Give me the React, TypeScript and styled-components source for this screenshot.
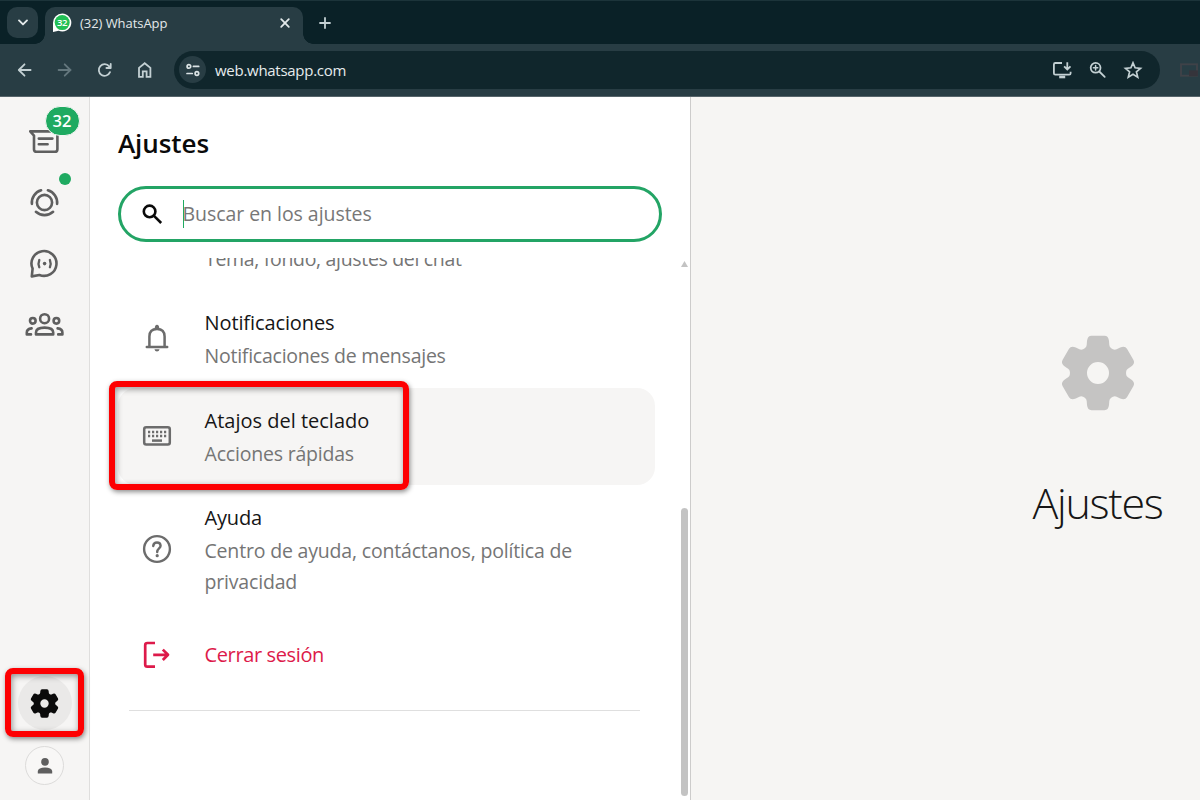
import React from 'react';
import styled, { createGlobalStyle } from 'styled-components';

const Global = createGlobalStyle`
  * { box-sizing: border-box; }
  body { margin: 0; background: #f6f5f3; font-family: "Open Sans", "Noto Sans", sans-serif; }
  svg { display: block; flex: none; }
`;

const Window = styled.div`
  width: 1200px;
  height: 800px;
  overflow: hidden;
  display: flex;
  flex-direction: column;
`;

/* ---------- browser chrome ---------- */

const TabStrip = styled.div`
  height: 44px;
  flex: none;
  background: #0a2127;
  border-top: 1px solid #1c343a;
  display: flex;
  align-items: flex-end;
`;

const TabSearch = styled.div`
  width: 31px;
  height: 31px;
  margin: 0 7px 6px;
  border-radius: 10px;
  background: #283d44;
  display: grid;
  place-items: center;
`;

const Tab = styled.div`
  position: relative;
  width: 258px;
  height: 37px;
  padding: 0 11px 5px 7px;
  border-radius: 10px 10px 0 0;
  background: #283d44;
  display: flex;
  align-items: center;
  &::before,
  &::after {
    content: '';
    position: absolute;
    bottom: 0;
    width: 10px;
    height: 10px;
  }
  &::before {
    left: -10px;
    background: radial-gradient(circle at 0 0, transparent 9.5px, #283d44 10px);
  }
  &::after {
    right: -10px;
    background: radial-gradient(circle at 100% 0, transparent 9.5px, #283d44 10px);
  }
`;

const TabTitle = styled.span`
  flex: 1;
  margin-left: 8px;
  padding-bottom: 1px;
  color: #e3e9ea;
  font-size: 13px;
  letter-spacing: -0.05px;
  white-space: nowrap;
`;

const NewTab = styled.div`
  margin: 0 0 14px 15px;
`;

const Toolbar = styled.div`
  height: 53px;
  flex: none;
  padding: 0 0 1px 16px;
  background: #283d44;
  border-bottom: 1px solid #56646a;
  display: flex;
  align-items: center;
`;

const NavIcons = styled.div`
  display: flex;
  gap: 22px;
`;

const AddressBar = styled.div`
  width: 986px;
  height: 38px;
  flex: none;
  margin-left: 20px;
  padding: 0 17px 0 5px;
  border-radius: 19px;
  background: #10262c;
  display: flex;
  align-items: center;
`;

const SiteInfo = styled.div`
  width: 27px;
  height: 27px;
  border-radius: 50%;
  background: #283d44;
  display: grid;
  place-items: center;
`;

const Url = styled.span`
  flex: 1;
  margin-left: 9px;
  color: #e6ebec;
  font-size: 15px;
  letter-spacing: -0.28px;
`;

const AddressActions = styled.div`
  display: flex;
  align-items: center;
  gap: 16px;
`;

const CastSlot = styled.div`
  margin-left: 20px;
`;

/* ---------- page ---------- */

const Page = styled.div`
  flex: 1;
  min-height: 0;
  display: flex;
`;

const Rail = styled.nav`
  width: 90px;
  flex: none;
  border-right: 1px solid #dfdedd;
  background: #f6f5f4;
  display: flex;
  flex-direction: column;
  align-items: center;
  padding: 25px 0 15px;
`;

const RailItem = styled.div`
  position: relative;
  width: 40px;
  height: 40px;
  margin-bottom: 21px;
  display: grid;
  place-items: center;
`;

const CountBadge = styled.span`
  position: absolute;
  left: 20px;
  top: -16px;
  width: 35px;
  height: 30px;
  border-radius: 15px;
  background: #1faa61;
  border: 1px solid #f6f5f4;
  color: #fff;
  font-size: 16.5px;
  font-weight: 600;
  line-height: 27px;
  text-align: center;
`;

const UnreadDot = styled.span`
  position: absolute;
  left: 34px;
  top: -10px;
  width: 12px;
  height: 12px;
  border-radius: 50%;
  background: #1faa61;
`;

const RailFooter = styled.div`
  margin-top: auto;
  display: flex;
  flex-direction: column;
  align-items: center;
  gap: 16px;
`;

const SettingsButton = styled.div`
  position: relative;
  width: 54px;
  height: 54px;
  border-radius: 50%;
  background: #eae9e8;
  display: grid;
  place-items: center;
`;

const Avatar = styled.div`
  width: 39px;
  height: 39px;
  border-radius: 50%;
  border: 1px solid #dcdbda;
  background: #f8f7f6;
  display: grid;
  place-items: center;
`;

const Highlight = styled.div<{ $x: number; $y: number; $w: number; $h: number }>`
  position: absolute;
  left: ${(p) => p.$x}px;
  top: ${(p) => p.$y}px;
  width: ${(p) => p.$w}px;
  height: ${(p) => p.$h}px;
  border: 6px solid #fd0002;
  border-radius: 8px;
  box-shadow: 1px 2px 5px rgba(0, 0, 0, 0.45), inset 1px 2px 6px rgba(0, 0, 0, 0.42);
  pointer-events: none;
`;

const Panel = styled.section`
  width: 601px;
  flex: none;
  background: #fff;
  border-right: 1px solid #cdcccb;
  display: flex;
  flex-direction: column;
`;

const PanelTitle = styled.h1`
  margin: 29px 0 0 28px;
  color: #0a0a0a;
  font-size: 26px;
  font-weight: 600;
  line-height: 34px;
  letter-spacing: -0.08px;
`;

const SearchBox = styled.div`
  width: 544px;
  height: 56px;
  flex: none;
  margin: 26px 0 0 28px;
  padding-left: 20.5px;
  border: 3px solid #23a465;
  border-radius: 28px;
  display: flex;
  align-items: center;
`;

const Caret = styled.span`
  width: 1px;
  height: 28px;
  margin: 0 -1px 0 19px;
  background: #1faa61;
`;

const Placeholder = styled.span`
  padding-bottom: 2px;
  color: #777;
  font-size: 19.5px;
  letter-spacing: -0.05px;
`;

const Scroller = styled.div`
  flex: 1;
  min-height: 0;
  margin-top: 16px;
  overflow: hidden;
  display: flex;
  justify-content: space-between;
`;

const List = styled.div`
  width: 537px;
  margin: -16px 0 0 28px;
`;

const ScrolledItem = styled.div`
  padding: 0 0 16px 87px;
`;

const Item = styled.div<{ $active?: boolean; $roomy?: boolean }>`
  position: relative;
  padding: ${(p) => (p.$roomy ? '25px 0 24px 24px' : '17px 0 16px 24px')};
  border-radius: 18px;
  background: ${(p) => (p.$active ? '#f6f5f4' : 'transparent')};
  display: flex;
  align-items: center;
  margin-bottom: ${(p) => (p.$active ? 0 : 1)}px;
`;

const ItemIcon = styled.div`
  width: 30px;
  height: 32px;
  padding-bottom: 2px;
  margin-right: 32.5px;
`;

const ItemText = styled.div`
  width: 400px;
`;

const ItemTitle = styled.div<{ $danger?: boolean; $tracking: number }>`
  color: ${(p) => (p.$danger ? '#dd1a4a' : '#161616')};
  font-size: 20px;
  line-height: 32px;
  letter-spacing: ${(p) => p.$tracking}px;
`;

const ItemDetail = styled.div<{ $tracking: number }>`
  margin-top: 1px;
  color: #757575;
  font-size: 19.5px;
  line-height: 31px;
  letter-spacing: ${(p) => p.$tracking}px;
`;

const Divider = styled.div`
  height: 1px;
  width: 511px;
  margin: 15px 0 0 11px;
  background: #dfdfdf;
`;

const ScrollTrack = styled.div`
  width: 10px;
  padding: 3px 0 4px 1px;
  display: flex;
  flex-direction: column;
  justify-content: space-between;
`;

const ScrollThumb = styled.div`
  width: 7px;
  height: 288px;
  border-radius: 4px;
  background: #c3c3c3;
`;

const Detail = styled.main`
  flex: 1;
  background: #f6f5f3;
  display: flex;
  flex-direction: column;
  align-items: center;
  padding: 238px 0 0 304px;
`;

const DetailTitle = styled.h2`
  margin: 57px 0 0;
  color: #161616;
  font-size: 43px;
  font-weight: 300;
  line-height: 70px;
  letter-spacing: -1.3px;
`;

/* ---------- icons ---------- */

type Stroke = { w: number; h: number; box?: string; color?: string; sw?: number; children: React.ReactNode };
const Line = ({ w, h, box, color = '#5f5f5f', sw = 2.6, children }: Stroke) => (
  <svg width={w} height={h} viewBox={box ?? `0 0 ${w} ${h}`} fill="none" stroke={color} strokeWidth={sw} strokeLinecap="round" strokeLinejoin="round">
    {children}
  </svg>
);

const rot = (x: number, y: number, k: number) => {
  const a = (k * Math.PI) / 3;
  return `${(x * Math.cos(a) - y * Math.sin(a)).toFixed(2)} ${(x * Math.sin(a) + y * Math.cos(a)).toFixed(2)}`;
};
const gearPath =
  [0, 1, 2, 3, 4, 5]
    .map((k) => {
      const p = (x: number, y: number) => rot(x, y, k);
      return `${k ? 'L' : 'M'}${p(-13.2, -24.8)}Q${p(-11.4, -26)} ${p(-11.3, -28)}L${p(-11, -32)}Q${p(-10.4, -37.2)} ${p(-6.5, -37.2)}L${p(6.5, -37.2)}Q${p(10.4, -37.2)} ${p(11, -32)}L${p(11.3, -28)}Q${p(11.4, -26)} ${p(13.2, -24.8)}`;
    })
    .join('') + 'ZM11 0A11 11 0 1 0 -11 0A11 11 0 1 0 11 0Z';

const Gear = ({ size, color }: { size: number; color: string }) => (
  <svg width={size} height={size} viewBox="-38 -38 76 76">
    <path d={gearPath} fill={color} fillRule="evenodd" />
  </svg>
);

const chromeInk = '#c3d0d3';

const TabIcon = styled.span`
  position: relative;
  width: 20px;
  height: 20px;
`;
const TabIconCount = styled.span`
  position: absolute;
  inset: 0;
  color: #fff;
  font-size: 9.5px;
  font-weight: 600;
  line-height: 19px;
  text-align: center;
  letter-spacing: -0.4px;
`;

const keys = [6, 10, 14, 18, 22];

export default function App() {
  return (
    <>
      <Global />
      <Window>
        <TabStrip>
          <TabSearch>
            <Line w={12} h={12} color="#e3e9ea" sw={1.9}><path d="M2 3.4 6 7.4 10 3.4" /></Line>
          </TabSearch>
          <Tab>
            <TabIcon>
              <svg width="20" height="20" viewBox="0 0 20 20">
                <path d="M10.2.6a9 9 0 1 1-3.6 17.2L1 18.9V9.8A9.2 9.2 0 0 1 10.2.6Z" fill="#fff" />
                <circle cx="10.2" cy="9.6" r="7.5" fill="#22bf55" />
              </svg>
              <TabIconCount>32</TabIconCount>
            </TabIcon>
            <TabTitle>(32) WhatsApp</TabTitle>
            <Line w={14} h={14} color="#e3e9ea" sw={1.8}><path d="M3.2 3.2l7.6 7.6M10.8 3.2l-7.6 7.6" /></Line>
          </Tab>
          <NewTab>
            <Line w={14} h={14} color={chromeInk} sw={1.8}><path d="M7 2v10M2 7h10" /></Line>
          </NewTab>
        </TabStrip>

        <Toolbar>
          <NavIcons>
            <Line w={18} h={18} color={chromeInk} sw={1.8}><path d="M14.6 9H3M8.5 3.3 2.8 9l5.7 5.7" /></Line>
            <Line w={18} h={18} color="#64777d" sw={1.8}><path d="M2.6 9h12M8.7 3.3 14.4 9l-5.7 5.7" /></Line>
            <Line w={18} h={18} color={chromeInk} sw={1.8}><path d="M14 11.2A5.8 5.8 0 1 1 13.2 5.4L14.7 6.8M14.7 2.8V7H10.4" /></Line>
            <Line w={18} h={18} color={chromeInk} sw={1.8}><path d="M3 6.9 8.7 2.2l5.7 4.7v8.9h-3.8v-5.4H6.8v5.4H3Z" strokeLinejoin="miter" /></Line>
          </NavIcons>
          <AddressBar>
            <SiteInfo>
              <Line w={16} h={16} color="#dbe3e5" sw={1.7}>
                <circle cx="3.9" cy="4.4" r="1.8" /><path d="M8.4 4.4h5.3M2 11.5h5.3" /><circle cx="11.9" cy="11.5" r="1.8" />
              </Line>
            </SiteInfo>
            <Url>web.whatsapp.com</Url>
            <AddressActions>
              <Line w={20} h={18} color={chromeInk} sw={1.8}>
                <path d="M9 2H2.3Q.9 2 .9 3.4v8.8q0 1.4 1.4 1.4h13.9q1.4 0 1.4-1.4v-1.4M14.3 1.2v7M11.1 5.3l3.2 3.2 3.2-3.2" strokeLinecap="butt" strokeLinejoin="miter" />
                <path d="M6.2 16h6" strokeWidth="2.6" strokeLinecap="butt" />
              </Line>
              <Line w={18} h={18} color={chromeInk} sw={1.8}>
                <circle cx="6.6" cy="6.8" r="4.9" /><path d="M10.3 10.5l5.4 5.4" /><path d="M4.4 6.8h4.4M6.6 4.6V9" strokeWidth="1.5" />
              </Line>
              <Line w={20} h={18} color={chromeInk} sw={1.7}>
                <path d="M10 1.8l2.1 5 5.4.5-4.1 3.5 1.3 5.3-4.7-2.9-4.7 2.9 1.3-5.3-4.1-3.5 5.4-.5Z" strokeLinejoin="miter" />
              </Line>
            </AddressActions>
          </AddressBar>
          <CastSlot>
            <svg width="18" height="14" viewBox="0 0 18 14">
              <rect x="1" y="1.3" width="16" height="11.4" fill="none" stroke="#3f4248" strokeWidth="1.9" />
              <rect x="9" y="7.4" width="8.8" height="5.8" fill="#35343b" />
            </svg>
          </CastSlot>
        </Toolbar>

        <Page>
          <Rail>
            <RailItem>
              <Line w={32} h={26}>
                <path d="M1.2 2.4H26Q28.4 2.4 28.4 4.6V20.2Q28.4 22.8 25.8 22.8H7.6Q5 22.8 5 20.4V6.6L1.2 2.4" />
                <path d="M9.8 9.6H23.4M9.8 15.2H18.6" />
              </Line>
              <CountBadge>32</CountBadge>
            </RailItem>
            <RailItem>
              <Line w={30} h={30} box="-14.5 -14.5 30 30">
                <circle r="7.6" />
                <path d="M-12.6 1.4A12.7 12.7 0 0 1-3.4-12.2M3.4-12.2A12.7 12.7 0 0 1 12.6 1.4M-8.6 9.3A12.7 12.7 0 0 0 8.6 9.3" />
              </Line>
              <UnreadDot />
            </RailItem>
            <RailItem>
              <Line w={30} h={30}>
                <path d="M1.8 27.4 2.6 19.6A12.5 12.4 0 1 1 9.4 26Z" />
                <path d="M9.3 11Q7.8 14.6 9.3 18.2M19.9 11Q21.4 14.6 19.9 18.2" strokeWidth="2.3" />
                <circle cx="14.6" cy="14.6" r="1.8" fill="#5f5f5f" stroke="none" />
              </Line>
            </RailItem>
            <RailItem>
              <Line w={40} h={26}>
                <circle cx="19.6" cy="6.7" r="4.5" />
                <circle cx="7.8" cy="8.8" r="2.8" />
                <circle cx="31.4" cy="8.8" r="2.8" />
                <path d="M11 22.4V20.4Q11 15.6 19.6 15.6T28.2 20.4V22.4Z" />
                <path d="M6.6 16.4Q1.8 17 1.8 20.4V22.4H6M32.6 16.4Q37.4 17 37.4 20.4V22.4H33.2" />
              </Line>
            </RailItem>
            <RailFooter>
              <SettingsButton>
                <Gear size={29} color="#0a0a0a" />
                <Highlight $x={-13} $y={-8} $w={79} $h={69} />
              </SettingsButton>
              <Avatar>
                <svg width="16" height="16" viewBox="0 0 16 16" fill="#5f5f5f">
                  <circle cx="8" cy="3.9" r="3.8" />
                  <path d="M.8 15.6V13Q1.4 9.8 8 9.6 14.6 9.8 15.2 13V15.6Z" />
                </svg>
              </Avatar>
            </RailFooter>
          </Rail>

          <Panel>
            <PanelTitle>Ajustes</PanelTitle>
            <SearchBox>
              <Line w={22} h={22} color="#0a0a0a" sw={2.6}>
                <circle cx="7.6" cy="8.4" r="5.8" /><path d="M12 12.8l7.2 7.2" strokeLinecap="butt" />
              </Line>
              <Caret />
              <Placeholder>Buscar en los ajustes</Placeholder>
            </SearchBox>
            <Scroller>
              <List>
                <ScrolledItem>
                  <ItemDetail $tracking={-0.32}>Tema, fondo, ajustes del chat</ItemDetail>
                </ScrolledItem>
                <Item>
                  <ItemIcon>
                    <Line w={30} h={30} color="#6c6c6c" sw={2.5}>
                      <path d="M4.8 24H25.2M7.4 24V13.6Q7.4 6 15 6T22.6 13.6V24" />
                      <path d="M12.7 5.6Q12.8 1.8 15 1.8T17.3 5.6ZM12.4 26.2H17.6Q17 28.6 15 28.6T12.4 26.2Z" fill="#6c6c6c" stroke="none" />
                    </Line>
                  </ItemIcon>
                  <ItemText>
                    <ItemTitle $tracking={-0.1}>Notificaciones</ItemTitle>
                    <ItemDetail $tracking={-0.24}>Notificaciones de mensajes</ItemDetail>
                  </ItemText>
                </Item>
                <Item $active>
                  <ItemIcon>
                    <Line w={30} h={30} color="#6c6c6c" sw={2.5}>
                      <rect x="2.2" y="6.2" width="25.6" height="17.4" rx="2" />
                      {keys.map((x) => (
                        <path key={x} d={`M${x} 11H${x + 2.2}M${x} 15H${x + 2.2}`} strokeLinecap="butt" />
                      ))}
                      <path d="M10 19.6H20" strokeLinecap="butt" />
                    </Line>
                  </ItemIcon>
                  <ItemText>
                    <ItemTitle $tracking={0}>Atajos del teclado</ItemTitle>
                    <ItemDetail $tracking={-0.2}>Acciones rápidas</ItemDetail>
                  </ItemText>
                  <Highlight $x={-9} $y={-7} $w={300} $h={109} />
                </Item>
                <Item>
                  <ItemIcon>
                    <Line w={30} h={30} color="#6c6c6c" sw={2.4}>
                      <circle cx="15" cy="15" r="12.9" />
                      <path d="M11.2 12Q11.6 8.5 15 8.5T18.6 11.8C18.6 14.4 15.2 14.6 15.2 18" />
                      <circle cx="15.2" cy="21.7" r="1.6" fill="#6c6c6c" stroke="none" />
                    </Line>
                  </ItemIcon>
                  <ItemText>
                    <ItemTitle $tracking={-0.15}>Ayuda</ItemTitle>
                    <ItemDetail $tracking={-0.18}>Centro de ayuda, contáctanos, política de privacidad</ItemDetail>
                  </ItemText>
                </Item>
                <Item $roomy>
                  <ItemIcon>
                    <Line w={30} h={32} color="#dd1a4a" sw={2.7}>
                      <path d="M13 4H5.4Q3.2 4 3.2 6.2V25.4Q3.2 27.6 5.4 27.6H13M11.2 15.8H25.6M20.8 10.6 26 15.8 20.8 21" strokeLinecap="butt" />
                    </Line>
                  </ItemIcon>
                  <ItemText>
                    <ItemTitle $danger $tracking={-0.37}>Cerrar sesión</ItemTitle>
                  </ItemText>
                </Item>
                <Divider />
              </List>
              <ScrollTrack>
                <svg width="7" height="6" viewBox="0 0 7 6"><path d="M3.5 0 7 6H0Z" fill="#c3c3c3" /></svg>
                <ScrollThumb />
              </ScrollTrack>
            </Scroller>
          </Panel>

          <Detail>
            <Gear size={76} color="#c5c4c3" />
            <DetailTitle>Ajustes</DetailTitle>
          </Detail>
        </Page>
      </Window>
    </>
  );
}
